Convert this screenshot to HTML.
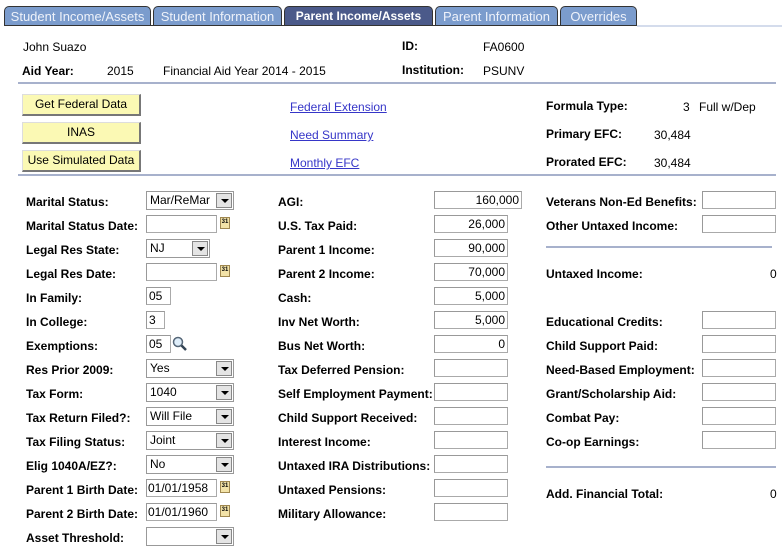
<!DOCTYPE html>
<html><head><style>
*{margin:0;padding:0;box-sizing:border-box}
body{width:782px;height:550px;background:#fff;position:relative;font-family:"Liberation Sans",Arial,sans-serif;font-size:12px;color:#000;overflow:hidden}
.a{position:absolute;white-space:nowrap;line-height:14px}
.b{font-weight:bold}
.tab{position:absolute;top:6px;height:20px;background:#7b9ccd;border:1px solid #333;border-bottom:none;border-radius:5px 5px 0 0;color:#eef2fa;font-weight:normal;font-size:13px;line-height:19px;text-align:center}
.tab.on{background:#4b5a8a;color:#fff;font-weight:bold;font-size:12px}
.hr{position:absolute;height:2px;background:#a7b1cc}
.btn{position:absolute;left:22px;width:119px;height:22px;background:#fbf9b4;border:1px solid #ddd;border-right:2px solid #777;border-bottom:2px solid #777;text-align:center;line-height:19px;font-size:12px}
.lnk{position:absolute;left:290px;color:#3636c8;text-decoration:underline}
.in{position:absolute;height:18px;border:1px solid #aaa;border-top-color:#999;border-left-color:#999;background:#fff;text-align:right;padding-right:2px;line-height:16px}
.sel{position:absolute;height:19px;border:1px solid #999;background:#fff;line-height:16px;padding-left:3px}
.sel i{position:absolute;right:1px;top:1px;width:16px;height:15px;background:#e4e4e4;border:1px solid #888}
.sel i:after{content:"";position:absolute;left:4px;top:5px;border-left:4px solid transparent;border-right:4px solid transparent;border-top:4px solid #000}
.cal{position:absolute;width:10px;height:12px;background:#f3e3a8;border:1px solid #a08850;font-size:6px;line-height:9px;text-align:center;font-weight:bold}
</style></head><body>
<div class="tab" style="left:4px;width:147px">Student Income/Assets</div>
<div class="tab" style="left:153px;width:129px">Student Information</div>
<div class="tab on" style="left:284px;width:149px">Parent Income/Assets</div>
<div class="tab" style="left:435px;width:123px">Parent Information</div>
<div class="tab" style="left:560px;width:77px">Overrides</div>
<div style="position:absolute;left:4px;top:25px;width:633px;height:1px;background:#333"></div>
<div style="position:absolute;left:637px;top:25px;width:145px;height:2px;background:#d4dcec"></div>

<div class="a" style="left:23px;top:40px">John Suazo</div>
<div class="a b" style="left:22px;top:64px">Aid Year:</div>
<div class="a" style="left:107px;top:64px">2015</div>
<div class="a" style="left:163px;top:64px">Financial Aid Year 2014 - 2015</div>
<div class="a b" style="left:402px;top:39px">ID:</div>
<div class="a" style="left:483px;top:40px">FA0600</div>
<div class="a b" style="left:402px;top:63px">Institution:</div>
<div class="a" style="left:483px;top:64px">PSUNV</div>
<div class="hr" style="left:18px;top:82px;width:758px"></div>

<div class="btn" style="top:94px">Get Federal Data</div>
<div class="btn" style="top:122px">INAS</div>
<div class="btn" style="top:150px">Use Simulated Data</div>
<div class="lnk a" style="top:100px">Federal Extension</div>
<div class="lnk a" style="top:128px">Need Summary</div>
<div class="lnk a" style="top:156px">Monthly EFC</div>
<div class="a b" style="left:546px;top:99px">Formula Type:</div>
<div class="a" style="left:683px;top:100px">3</div>
<div class="a" style="left:699px;top:100px">Full w/Dep</div>
<div class="a b" style="left:546px;top:127px">Primary EFC:</div>
<div class="a" style="left:654px;top:128px">30,484</div>
<div class="a b" style="left:546px;top:155px">Prorated EFC:</div>
<div class="a" style="left:654px;top:156px">30,484</div>
<div class="hr" style="left:18px;top:174px;width:758px"></div>

<div class="a b" style="left:26px;top:195px">Marital Status:</div>
<div class="a b" style="left:26px;top:219px">Marital Status Date:</div>
<div class="a b" style="left:26px;top:243px">Legal Res State:</div>
<div class="a b" style="left:26px;top:267px">Legal Res Date:</div>
<div class="a b" style="left:26px;top:291px">In Family:</div>
<div class="a b" style="left:26px;top:315px">In College:</div>
<div class="a b" style="left:26px;top:339px">Exemptions:</div>
<div class="a b" style="left:26px;top:363px">Res Prior 2009:</div>
<div class="a b" style="left:26px;top:387px">Tax Form:</div>
<div class="a b" style="left:26px;top:411px">Tax Return Filed?:</div>
<div class="a b" style="left:26px;top:435px">Tax Filing Status:</div>
<div class="a b" style="left:26px;top:459px">Elig 1040A/EZ?:</div>
<div class="a b" style="left:26px;top:483px">Parent 1 Birth Date:</div>
<div class="a b" style="left:26px;top:507px">Parent 2 Birth Date:</div>
<div class="a b" style="left:26px;top:531px">Asset Threshold:</div>

<div class="sel" style="left:146px;top:191px;width:88px">Mar/ReMar<i></i></div>
<div class="in" style="left:146px;top:215px;width:71px"></div><div class="cal" style="left:220px;top:217px">31</div>
<div class="sel" style="left:146px;top:239px;width:64px">NJ<i></i></div>
<div class="in" style="left:146px;top:263px;width:71px"></div><div class="cal" style="left:220px;top:265px">31</div>
<div class="in" style="left:146px;top:287px;width:25px;text-align:left;padding-left:2px">05</div>
<div class="in" style="left:146px;top:311px;width:19px;text-align:left;padding-left:2px">3</div>
<div class="in" style="left:146px;top:335px;width:25px;text-align:left;padding-left:2px">05</div>
<svg style="position:absolute;left:172px;top:336px" width="16" height="16"><circle cx="6" cy="6" r="4.5" fill="#dfeefa" stroke="#567" stroke-width="1.5"/><line x1="9.5" y1="9.5" x2="14" y2="14" stroke="#345" stroke-width="2.5"/></svg>
<div class="sel" style="left:146px;top:359px;width:88px">Yes<i></i></div>
<div class="sel" style="left:146px;top:383px;width:88px">1040<i></i></div>
<div class="sel" style="left:146px;top:407px;width:88px">Will File<i></i></div>
<div class="sel" style="left:146px;top:431px;width:88px">Joint<i></i></div>
<div class="sel" style="left:146px;top:455px;width:88px">No<i></i></div>
<div class="in" style="left:146px;top:479px;width:71px;text-align:left;padding-left:1px">01/01/1958</div><div class="cal" style="left:220px;top:481px">31</div>
<div class="in" style="left:146px;top:503px;width:71px;text-align:left;padding-left:1px">01/01/1960</div><div class="cal" style="left:220px;top:505px">31</div>
<div class="sel" style="left:146px;top:527px;width:88px"><i></i></div>

<div class="a b" style="left:278px;top:195px">AGI:</div>
<div class="a b" style="left:278px;top:219px">U.S. Tax Paid:</div>
<div class="a b" style="left:278px;top:243px">Parent 1 Income:</div>
<div class="a b" style="left:278px;top:267px">Parent 2 Income:</div>
<div class="a b" style="left:278px;top:291px">Cash:</div>
<div class="a b" style="left:278px;top:315px">Inv Net Worth:</div>
<div class="a b" style="left:278px;top:339px">Bus Net Worth:</div>
<div class="a b" style="left:278px;top:363px">Tax Deferred Pension:</div>
<div class="a b" style="left:278px;top:387px">Self Employment Payment:</div>
<div class="a b" style="left:278px;top:411px">Child Support Received:</div>
<div class="a b" style="left:278px;top:435px">Interest Income:</div>
<div class="a b" style="left:278px;top:459px">Untaxed IRA Distributions:</div>
<div class="a b" style="left:278px;top:483px">Untaxed Pensions:</div>
<div class="a b" style="left:278px;top:507px">Military Allowance:</div>
<div class="in" style="left:434px;top:191px;width:88px">160,000</div>
<div class="in" style="left:434px;top:215px;width:74px">26,000</div>
<div class="in" style="left:434px;top:239px;width:74px">90,000</div>
<div class="in" style="left:434px;top:263px;width:74px">70,000</div>
<div class="in" style="left:434px;top:287px;width:74px">5,000</div>
<div class="in" style="left:434px;top:311px;width:74px">5,000</div>
<div class="in" style="left:434px;top:335px;width:74px">0</div>
<div class="in" style="left:434px;top:359px;width:74px"></div>
<div class="in" style="left:434px;top:383px;width:74px"></div>
<div class="in" style="left:434px;top:407px;width:74px"></div>
<div class="in" style="left:434px;top:431px;width:74px"></div>
<div class="in" style="left:434px;top:455px;width:74px"></div>
<div class="in" style="left:434px;top:479px;width:74px"></div>
<div class="in" style="left:434px;top:503px;width:74px"></div>

<div class="a b" style="left:546px;top:195px">Veterans Non-Ed Benefits:</div>
<div class="a b" style="left:546px;top:219px">Other Untaxed Income:</div>
<div class="hr" style="left:546px;top:246px;width:226px"></div>
<div class="a b" style="left:546px;top:267px">Untaxed Income:</div>
<div class="a" style="left:770px;top:267px">0</div>
<div class="a b" style="left:546px;top:315px">Educational Credits:</div>
<div class="a b" style="left:546px;top:339px">Child Support Paid:</div>
<div class="a b" style="left:546px;top:363px">Need-Based Employment:</div>
<div class="a b" style="left:546px;top:387px">Grant/Scholarship Aid:</div>
<div class="a b" style="left:546px;top:411px">Combat Pay:</div>
<div class="a b" style="left:546px;top:435px">Co-op Earnings:</div>
<div class="hr" style="left:546px;top:466px;width:230px"></div>
<div class="a b" style="left:546px;top:487px">Add. Financial Total:</div>
<div class="a" style="left:770px;top:487px">0</div>
<div class="in" style="left:702px;top:191px;width:74px"></div>
<div class="in" style="left:702px;top:215px;width:74px"></div>
<div class="in" style="left:702px;top:311px;width:74px"></div>
<div class="in" style="left:702px;top:335px;width:74px"></div>
<div class="in" style="left:702px;top:359px;width:74px"></div>
<div class="in" style="left:702px;top:383px;width:74px"></div>
<div class="in" style="left:702px;top:407px;width:74px"></div>
<div class="in" style="left:702px;top:431px;width:74px"></div>
</body></html>
